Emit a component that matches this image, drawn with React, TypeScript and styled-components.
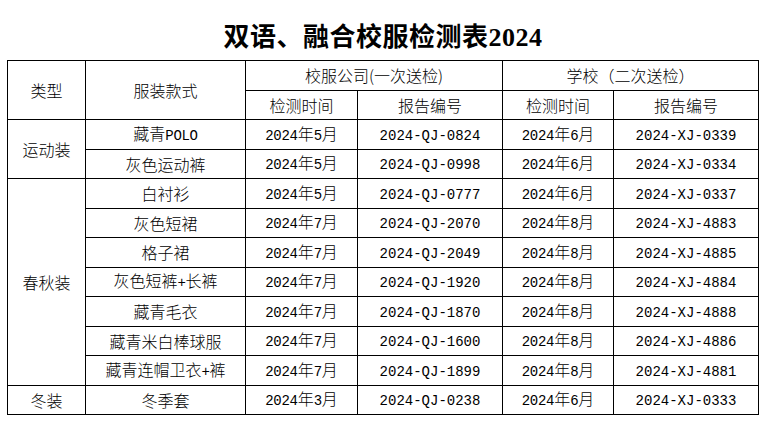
import React, { FC, ReactNode } from 'react';
import styled, { createGlobalStyle } from 'styled-components';

const GlobalStyle = createGlobalStyle`
  html, body {
    margin: 0;
    padding: 0;
    background: #fff;
  }
  body {
    font-family: "Noto Sans CJK SC", sans-serif;
    color: #000;
  }
`;

const Page = styled.div`
  width: 766px;
  height: 424px;
  padding: 0 0 0 7px;
  box-sizing: border-box;
`;

const Title = styled.h1`
  width: 752px;
  height: 60px;
  margin: 0;
  padding-top: 8px;
  box-sizing: border-box;
  display: flex;
  align-items: center;
  justify-content: center;
  font-family: "Liberation Serif", "Noto Sans CJK SC", serif;
  font-size: 26px;
  font-weight: 700;
  letter-spacing: 0.5px;
`;

const Table = styled.table`
  width: 752px;
  border-collapse: collapse;
  table-layout: fixed;
`;

const Cell = styled.td`
  height: 28.5px;
  padding: 0;
  border: 1px solid #000;
  text-align: center;
  vertical-align: middle;
  font-size: 16px;
  font-weight: 300;
  line-height: 20px;
  white-space: nowrap;
`;

const HeadCell = styled(Cell).attrs({ as: 'th' })``;

const Latin = styled.span<{ $code?: boolean }>`
  font-family: "Liberation Mono", monospace;
  font-size: 14px;
  font-weight: 400;
  letter-spacing: ${({ $code }) => ($code ? '0' : '-0.3px')};
`;

// split into ASCII and CJK runs so latin parts get the narrow mono face
const mix = (text: string): ReactNode[] =>
  (text.match(/[\x00-\x7f]+|[^\x00-\x7f]+/g) || []).map((part, i) =>
    /^[\x00-\x7f]+$/.test(part) ? <Latin key={i}>{part}</Latin> : part,
  );

interface IRow {
  item: string;
  firstDate: string;
  firstCode: string;
  schoolDate: string;
  schoolCode: string;
}

interface IGroup {
  kind: string;
  rows: IRow[];
}

const groups: IGroup[] = [
  {
    kind: '运动装',
    rows: [
      { item: '藏青POLO', firstDate: '2024年5月', firstCode: '2024-QJ-0824', schoolDate: '2024年6月', schoolCode: '2024-XJ-0339' },
      { item: '灰色运动裤', firstDate: '2024年5月', firstCode: '2024-QJ-0998', schoolDate: '2024年6月', schoolCode: '2024-XJ-0334' },
    ],
  },
  {
    kind: '春秋装',
    rows: [
      { item: '白衬衫', firstDate: '2024年5月', firstCode: '2024-QJ-0777', schoolDate: '2024年6月', schoolCode: '2024-XJ-0337' },
      { item: '灰色短裙', firstDate: '2024年7月', firstCode: '2024-QJ-2070', schoolDate: '2024年8月', schoolCode: '2024-XJ-4883' },
      { item: '格子裙', firstDate: '2024年7月', firstCode: '2024-QJ-2049', schoolDate: '2024年8月', schoolCode: '2024-XJ-4885' },
      { item: '灰色短裤+长裤', firstDate: '2024年7月', firstCode: '2024-QJ-1920', schoolDate: '2024年8月', schoolCode: '2024-XJ-4884' },
      { item: '藏青毛衣', firstDate: '2024年7月', firstCode: '2024-QJ-1870', schoolDate: '2024年8月', schoolCode: '2024-XJ-4888' },
      { item: '藏青米白棒球服', firstDate: '2024年7月', firstCode: '2024-QJ-1600', schoolDate: '2024年8月', schoolCode: '2024-XJ-4886' },
      { item: '藏青连帽卫衣+裤', firstDate: '2024年7月', firstCode: '2024-QJ-1899', schoolDate: '2024年8月', schoolCode: '2024-XJ-4881' },
    ],
  },
  {
    kind: '冬装',
    rows: [
      { item: '冬季套', firstDate: '2024年3月', firstCode: '2024-QJ-0238', schoolDate: '2024年6月', schoolCode: '2024-XJ-0333' },
    ],
  },
];

const colWidths = [78, 160, 112, 145, 111, 145];

const App: FC = () => (
  <Page>
    <GlobalStyle />
    <Title>双语、融合校服检测表2024</Title>
    <Table>
      <colgroup>
        {colWidths.map((w, i) => (
          <col key={i} style={{ width: w }} />
        ))}
      </colgroup>
      <thead>
        <tr>
          <HeadCell rowSpan={2}>类型</HeadCell>
          <HeadCell rowSpan={2}>服装款式</HeadCell>
          <HeadCell colSpan={2}>校服公司(一次送检)</HeadCell>
          <HeadCell colSpan={2}>学校（二次送检）</HeadCell>
        </tr>
        <tr>
          <HeadCell>检测时间</HeadCell>
          <HeadCell>报告编号</HeadCell>
          <HeadCell>检测时间</HeadCell>
          <HeadCell>报告编号</HeadCell>
        </tr>
      </thead>
      <tbody>
        {groups.map((group) =>
          group.rows.map((row, i) => (
            <tr key={row.item}>
              {i === 0 && <Cell rowSpan={group.rows.length}>{group.kind}</Cell>}
              <Cell>{mix(row.item)}</Cell>
              <Cell>{mix(row.firstDate)}</Cell>
              <Cell><Latin $code>{row.firstCode}</Latin></Cell>
              <Cell>{mix(row.schoolDate)}</Cell>
              <Cell><Latin $code>{row.schoolCode}</Latin></Cell>
            </tr>
          )),
        )}
      </tbody>
    </Table>
  </Page>
);

export default App;
